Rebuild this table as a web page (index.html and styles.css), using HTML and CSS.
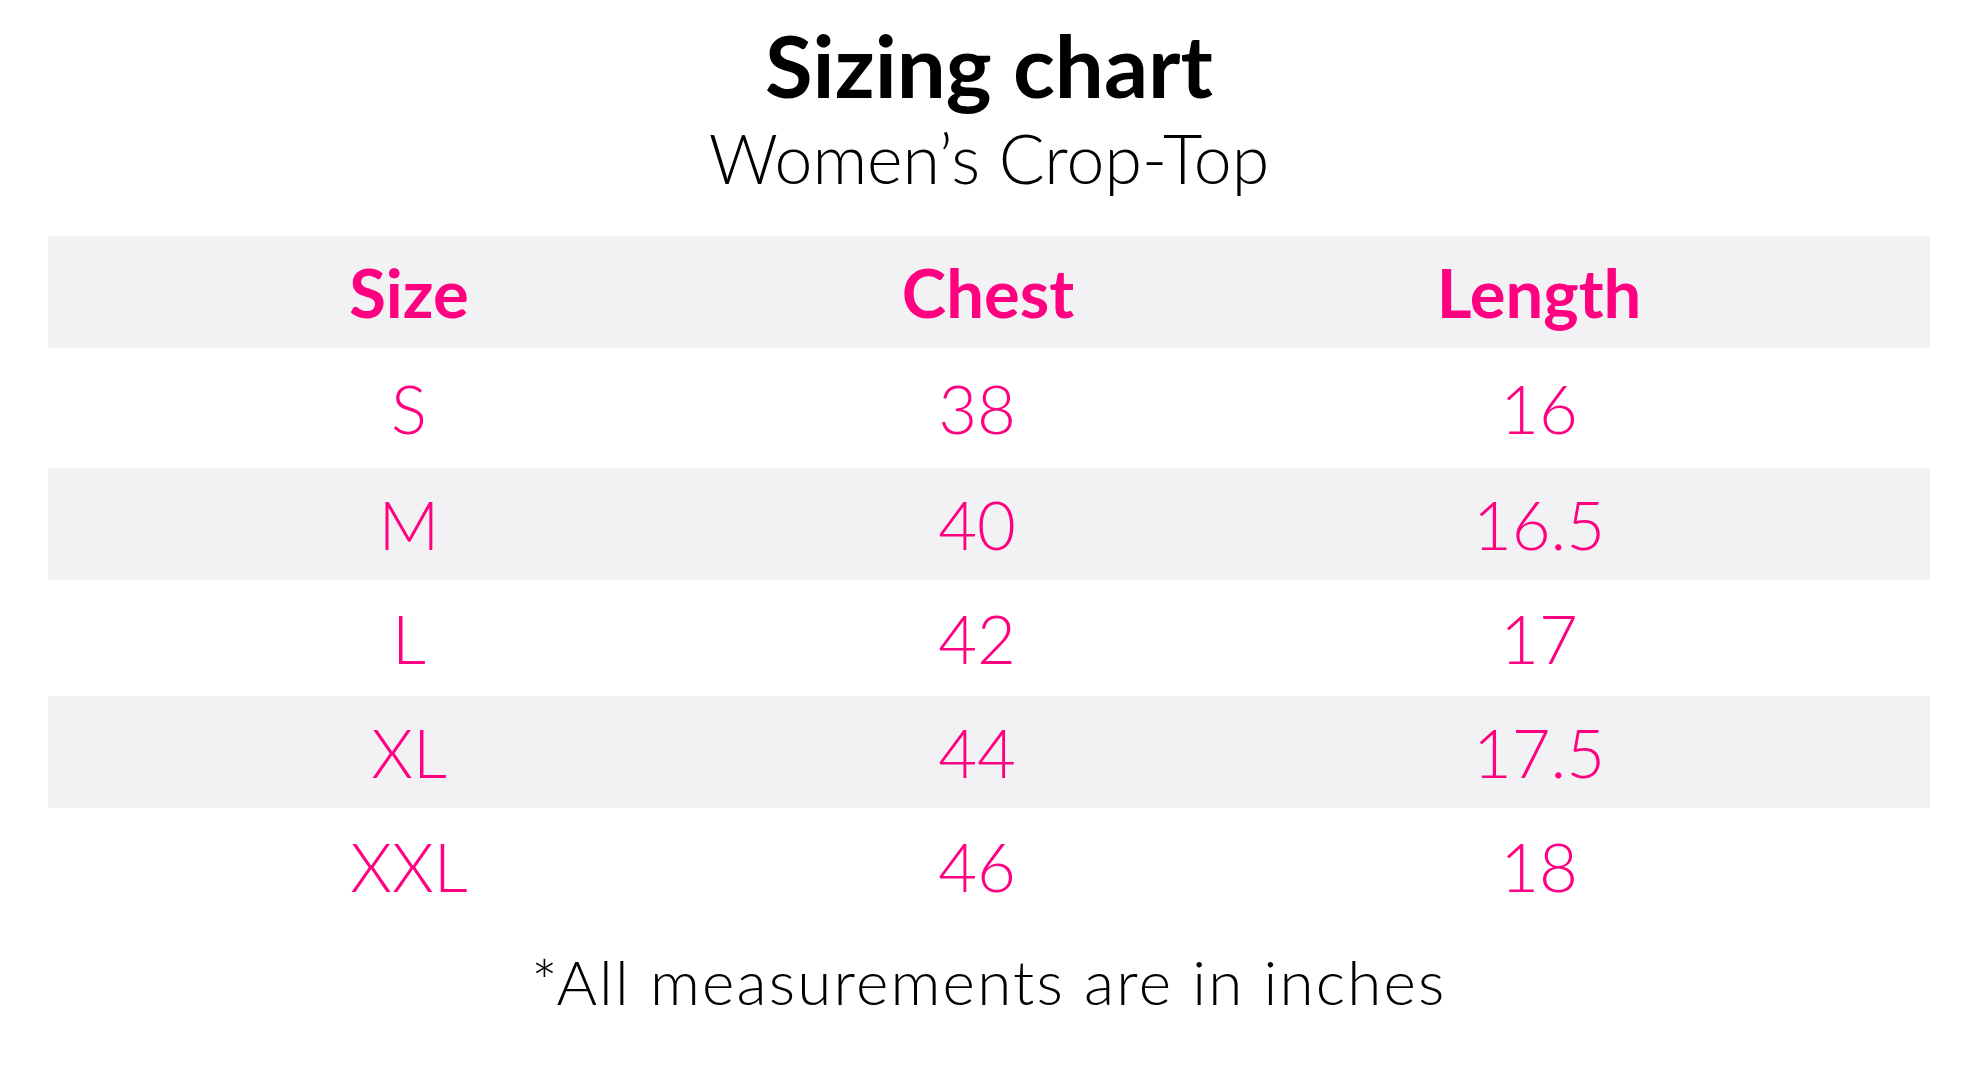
FILE: index.html
```html
<!DOCTYPE html>
<html lang="en">
<head>
<meta charset="utf-8">
<title>Sizing chart</title>
<link rel="stylesheet" href="styles.css">
</head>
<body>
<main class="page">
  <header class="heading">
    <h1 class="title">Sizing chart</h1>
    <p class="subtitle">Women’s Crop-Top</p>
  </header>
  <section class="chart">
    <div class="row row-head">
      <div class="cell">Size</div>
      <div class="cell">Chest</div>
      <div class="cell">Length</div>
    </div>
    <div class="row row-data row-s">
      <div class="cell">S</div>
      <div class="cell">38</div>
      <div class="cell">16</div>
    </div>
    <div class="row row-data row-shade">
      <div class="cell">M</div>
      <div class="cell">40</div>
      <div class="cell">16.5</div>
    </div>
    <div class="row row-data">
      <div class="cell">L</div>
      <div class="cell">42</div>
      <div class="cell">17</div>
    </div>
    <div class="row row-data row-shade">
      <div class="cell">XL</div>
      <div class="cell">44</div>
      <div class="cell">17.5</div>
    </div>
    <div class="row row-data">
      <div class="cell">XXL</div>
      <div class="cell">46</div>
      <div class="cell">18</div>
    </div>
  </section>
  <p class="note">*All measurements are in inches</p>
</main>
</body>
</html>
```

FILE: styles.css
```css
html, body {
  margin: 0;
  padding: 0;
  background: #ffffff;
}

body {
  font-family: Lato, "Open Sans", "Liberation Sans", sans-serif;
  color: #000000;
}

.page {
  width: 1978px;
  display: flex;
  flex-direction: column;
  align-items: center;
  padding-top: 15px;
}

.heading {
  display: flex;
  flex-direction: column;
  align-items: center;
}

.title {
  margin: 0;
  font-size: 87px;
  line-height: 100px;
  font-weight: 700;
}

.subtitle {
  margin: 0;
  font-size: 68px;
  line-height: 85px;
  font-weight: 300;
}

.chart {
  margin-top: 36px;
  width: 1882px;
  display: flex;
  flex-direction: column;
  color: #ff0080;
}

.row {
  display: grid;
  grid-template-columns: 722px 436px 666px 1fr;
  align-items: center;
  height: 116px;
}

.row-head {
  height: 112px;
  background: #f2f2f4;
  font-size: 67px;
  font-weight: 700;
}

.row-data {
  font-size: 67px;
  font-weight: 300;
}

.row-data .cell:nth-child(2) {
  padding-right: 22px;
}

.row-s {
  height: 120px;
}

.row-shade {
  height: 112px;
  background: #f2f2f4;
}

.cell {
  text-align: center;
  line-height: 1;
}

.note {
  margin: 21px 0 0;
  font-size: 62px;
  line-height: 72px;
  font-weight: 300;
  letter-spacing: 2.2px;
}
```
